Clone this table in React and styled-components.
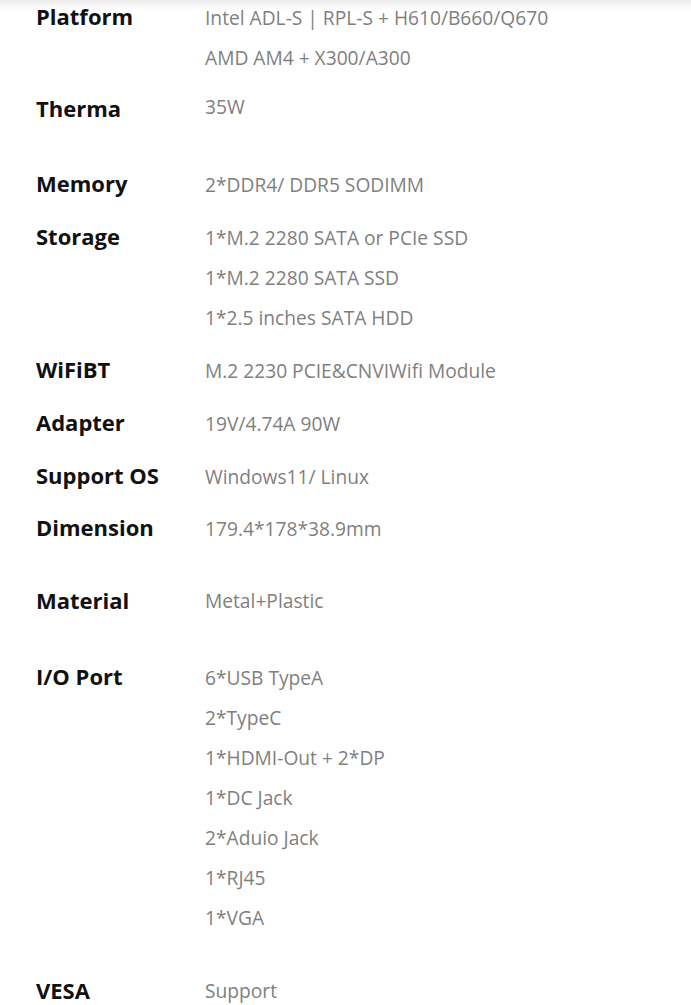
import React from "react";
import styled, { createGlobalStyle } from "styled-components";

const Global = createGlobalStyle`
  html, body { margin: 0; padding: 0; background: #fff; }
  body { font-family: "Open Sans", "Noto Sans", sans-serif; }
`;

const Page = styled.div`
  width: 691px;
  background: linear-gradient(to bottom, #ececec 0px, #f7f7f7 5px, #ffffff 11px);
  background-repeat: no-repeat;
  padding: 5px 0 0 36px;
  box-sizing: border-box;
`;

const Row = styled.div`
  display: grid;
  grid-template-columns: 169px 1fr;
  margin-top: ${(p) => p.$gap}px;
`;

const Label = styled.div`
  font-weight: 700;
  font-size: 22px;
  line-height: 26px;
  color: #111;
  transform: translateY(${(p) => (p.$shift || 0) - 2}px);
`;

const Values = styled.div`
  display: flex;
  flex-direction: column;
  gap: 14px;
`;

const Value = styled.div`
  font-size: 19.2px;
  line-height: 26px;
  color: #7f7f7f;
  white-space: nowrap;
`;

const specs = [
  { label: "Platform", values: ["Intel ADL-S | RPL-S + H610/B660/Q670", "AMD AM4 + X300/A300"], gap: 0 },
  { label: "Therma", values: ["35W"], gap: 23, shift: 3 },
  { label: "Memory", values: ["2*DDR4/ DDR5 SODIMM"], gap: 52 },
  { label: "Storage", values: ["1*M.2 2280 SATA or PCIe SSD", "1*M.2 2280 SATA SSD", "1*2.5 inches SATA HDD"], gap: 27 },
  { label: "WiFiBT", values: ["M.2 2230 PCIE&CNVIWifi Module"], gap: 27 },
  { label: "Adapter", values: ["19V/4.74A 90W"], gap: 27 },
  { label: "Support OS", values: ["Windows11/ Linux"], gap: 27 },
  { label: "Dimension", values: ["179.4*178*38.9mm"], gap: 26 },
  { label: "Material", values: ["Metal+Plastic"], gap: 46, shift: 1 },
  { label: "I/O Port", values: ["6*USB TypeA", "2*TypeC", "1*HDMI-Out + 2*DP", "1*DC Jack", "2*Aduio Jack", "1*RJ45", "1*VGA"], gap: 51 },
  { label: "VESA", values: ["Support"], gap: 47, shift: 1 },
];

export default function App() {
  return (
    <>
      <Global />
      <Page>
        {specs.map((s) => (
          <Row key={s.label} $gap={s.gap}>
            <Label $shift={s.shift}>{s.label}</Label>
            <Values>
              {s.values.map((v) => (
                <Value key={v}>{v}</Value>
              ))}
            </Values>
          </Row>
        ))}
      </Page>
    </>
  );
}
